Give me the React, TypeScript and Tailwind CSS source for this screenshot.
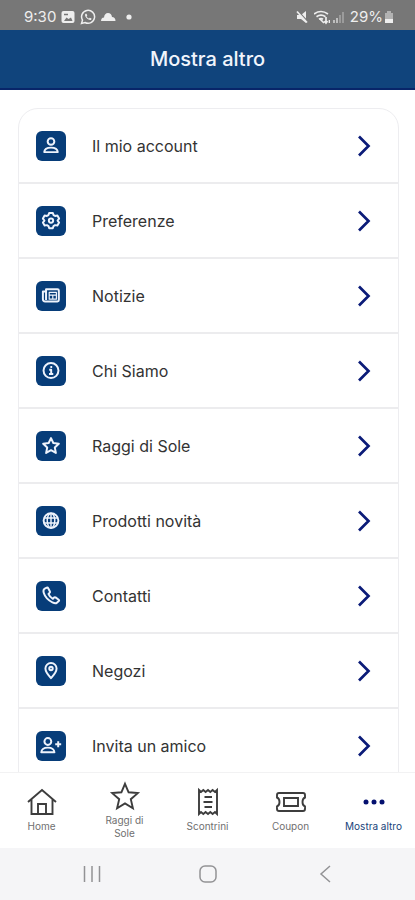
import { useState, type ReactNode } from "react";
import clsx from "clsx";

interface MenuItem {
  label: string;
  icon: ReactNode;
}

interface Tab {
  label: string;
  icon: ReactNode;
}

const MENU: MenuItem[] = [
  {
    label: "Il mio account",
    icon: (
      <>
        <circle cx="10" cy="5" r="3.700" />
        <path d="M2.500 16.800c.3-3.500 3-5 7.500-5s7.200 1.500 7.500 5z" />
      </>
    ),
  },
  {
    label: "Preferenze",
    icon: (
      <>
        <path d="M8 1h4l.8 2.400 1.700 1 2.600-.5 1.900 3.400-1.700 2.200 1.700 2.200-1.900 3.400-2.600-.5-1.700 1L12 18H8l-.8-2.400-1.700-1-2.600.5L1 11.700l1.700-2.200L1 7.300l1.900-3.400 2.600.5 1.700-1z" />
        <circle cx="10" cy="9.500" r="2.400" />
      </>
    ),
  },
  {
    label: "Notizie",
    icon: (
      <>
        <path d="M4.500 2.500h12.700q1.500 0 1.500 1.500v10.500q0 1.500-1.500 1.500H3.500Q1 16 1 13.500V5h3.500zM4.500 5v9.500" />
        <path d="M8 6h8v3H8zM8 9v4.500h8V9M12 9v4.500" strokeWidth="1.300" />
      </>
    ),
  },
  {
    label: "Chi Siamo",
    icon: (
      <>
        <circle cx="10" cy="9.500" r="8.300" />
        <path d="M8 8.700h2.200v4.500M7.800 13.300h4.700M9.300 5.500h2" />
      </>
    ),
  },
  {
    label: "Raggi di Sole",
    icon: (
      <path d="M10 1.200l2.600 5.500 6.100.7-4.500 4.200 1.200 6.100L10 14.700l-5.400 3 1.200-6.100-4.500-4.200 6.100-.7z" />
    ),
  },
  {
    label: "Prodotti novità",
    icon: (
      <>
        <circle cx="10" cy="9.500" r="8.200" />
        <ellipse cx="10" cy="9.500" rx="4.200" ry="8.200" strokeWidth="1.600" />
        <path d="M10 1.500v16M2.500 6.700h15M2.500 12.300h15" strokeWidth="1.600" />
      </>
    ),
  },
  {
    label: "Contatti",
    icon: (
      <path d="M5.300.8L2.600 2.200C.6 3.700 1.800 8.500 5.500 12.700c3.900 4.100 8.700 6 10.700 5.100l2.500-2.200q.7-.8-.1-1.500l-3.600-2.600q-.9-.5-1.600.2l-1.300 1.400C10.400 12.300 8 9.900 7.200 7.700l1.200-1.200q.8-.7.4-1.600L6.900 1.400q-.5-1-1.600-.6z" />
    ),
  },
  {
    label: "Negozi",
    icon: (
      <>
        <path d="M10 18C7.500 15.200 3.800 11.400 3.800 7.300a6.200 6.200 0 0 1 12.400 0c0 4.100-3.700 7.900-6.200 10.700z" />
        <circle cx="10" cy="7.300" r="1.900" />
      </>
    ),
  },
  {
    label: "Invita un amico",
    icon: (
      <>
        <circle cx="6.500" cy="5" r="3.800" />
        <path d="M-.8 17c.3-3.500 3-5.200 7.300-5.200s7 1.700 7.300 5.200z" />
        <path d="M18 4.700v6.600M14.700 8h6.600" />
      </>
    ),
  },
];

const TABS: Tab[] = [
  {
    label: "Home",
    icon: (
      <>
        <path d="M0 14L14 2l14 12M3.500 11.500V26h21V11.500" />
        <path d="M10 26V16h8v10" />
      </>
    ),
  },
  {
    label: "Raggi di Sole",
    icon: (
      <path d="M14 1.800l3.600 8.500 9.200.8-7 6.100 2.100 9-7.900-4.800-7.900 4.800 2.100-9-7-6.100 9.200-.8z" />
    ),
  },
  {
    label: "Scontrini",
    icon: (
      <>
        <path d="M5 2l2 2 2.300-2 2.300 2L14 2l2.300 2 2.300-2L21 4l2-2v24l-2-2-2.400 2-2.300-2L14 26l-2.400-2-2.300 2L7 24l-2 2z" />
        <path d="M10.500 9H18M9.500 14h9M10.500 19H18" />
      </>
    ),
  },
  {
    label: "Coupon",
    icon: (
      <>
        <path d="M2 5h24q2 0 2 2v2.500q-2.500 1-2.500 4.500t2.500 4.500V21q0 2-2 2H2q-2 0-2-2v-2.500q2.500-1 2.500-4.500T0 9.500V7q0-2 2-2z" />
        <path d="M7 10h14v8H7z" />
      </>
    ),
  },
  {
    label: "Mostra altro",
    icon: (
      <g fill="currentColor" stroke="none">
        <circle cx="6" cy="14" r="2.500" />
        <circle cx="14" cy="14" r="2.500" />
        <circle cx="22" cy="14" r="2.500" />
      </g>
    ),
  },
];

function StatusBar() {
  return (
    <div className="flex h-[30px] shrink-0 items-center justify-between bg-[#777777] pt-1 pr-5 pl-6 text-[15px] leading-5 text-[#eeeeee]">
      <div className="flex items-center gap-1">
        <span>9:30</span>
        <svg className="size-4" viewBox="0 0 16 16" aria-hidden="true">
          <rect x="1.500" y="2" width="13" height="12" rx="2" fill="currentColor" />
          <path d="M4 12l2.500-3.500L8.500 10 11 8.500l1.500 3.500z" fill="#777777" />
          <path d="M4 5.500h4" stroke="#777777" strokeWidth="1.500" />
        </svg>
        <svg className="size-4" viewBox="0 0 16 16" fill="none" stroke="currentColor" strokeWidth="1.500" aria-hidden="true">
          <path d="M1.500 14.500l1-3.400a6.500 6.500 0 1 1 2.500 2.400z" />
          <path d="M5.500 4.800c-.9 1-.5 2.700 1.300 4.400s3.600 2.200 4.500 1.200l.2-.8-1.700-.8-.8.8C8 9.200 7 8.200 6.600 7.200l.7-.8-.8-1.700z" fill="currentColor" stroke="none" />
        </svg>
        <svg className="size-4" viewBox="0 0 16 16" fill="currentColor" aria-hidden="true">
          <path d="M1 12c0-2 1-3.300 3-3.500C4.300 5.500 5.800 4 8 4s3.700 1.500 4 4c2 0 3.500 1.500 3.500 4z" />
        </svg>
        <svg className="ml-1 size-3" viewBox="0 0 12 12" fill="currentColor" aria-hidden="true">
          <circle cx="5" cy="6" r="2.600" />
        </svg>
      </div>
      <div className="flex items-center">
        <svg className="mr-1 size-4" viewBox="0 0 16 16" fill="currentColor" aria-hidden="true">
          <path d="M3 6h4l5-4v12l-5-4H3z" />
          <path d="M4 2l11 12" stroke="#777777" strokeWidth="1.500" />
          <path d="M3 2.500l10 11" stroke="currentColor" strokeWidth="1.700" />
        </svg>
        <svg className="size-4" viewBox="0 0 16 16" fill="none" stroke="currentColor" strokeWidth="1.700" aria-hidden="true">
          <path d="M0 5Q7 0 14 5M2.500 7.800q4.500-3.200 9 0M5 10.300q2-1.500 4 0" />
          <path d="M6 10l4 4M12 8v6M10.500 12l1.500 2 1.500-2M15.500 14v-3" />
        </svg>
        <svg className="mr-1 size-4" viewBox="0 0 16 16" fill="currentColor" aria-hidden="true">
          <path d="M3 11h2v3H3zM6 9h2v5H6z" opacity=".6" />
          <path d="M9 6h2v8H9zM12 3h2v11h-2z" opacity=".3" />
        </svg>
        <span>29%</span>
        <svg className="h-4 w-3" viewBox="0 0 12 16" fill="currentColor" aria-hidden="true">
          <path d="M4 2h4v2h2v6H2V4h2z" opacity=".5" />
          <path d="M2 10h8v4H2z" />
        </svg>
      </div>
    </div>
  );
}

function MenuRow({ label, icon }: MenuItem) {
  return (
    <li className="border-b-2 border-[#ececee]">
      <a href="#" className="flex h-[73px] items-center pr-6 pl-[17px]">
        <span className="flex size-[30px] items-center justify-center rounded-md bg-[#073d79]">
          <svg
            className="size-[18px] overflow-visible text-[#eef3fc]"
            viewBox="0 0 20 20"
            fill="none"
            stroke="currentColor"
            strokeWidth="2.200"
            strokeLinejoin="round"
            aria-hidden="true"
          >
            {icon}
          </svg>
        </span>
        <span className="ml-[26px] flex-1 text-base leading-5 text-[#333333]">{label}</span>
        <svg className="h-6 w-5" viewBox="0 0 20 24" fill="none" stroke="#0b1b78" strokeWidth="2.700" aria-hidden="true">
          <path d="M5 2.500l9.500 9.500L5 21.500" />
        </svg>
      </a>
    </li>
  );
}

function TabBar() {
  const [active, setActive] = useState("Mostra altro");
  return (
    <nav className="grid h-[76px] shrink-0 grid-cols-5 border-t border-[#f2f2f3] bg-white">
      {TABS.map((tab) => (
        <button
          key={tab.label}
          type="button"
          onClick={() => setActive(tab.label)}
          className={clsx(
            "flex flex-col items-center justify-center gap-1",
            active === tab.label ? "text-[#17437a]" : "text-[#707070]",
          )}
        >
          <svg
            className={clsx(
              "size-7 overflow-visible",
              active === tab.label ? "text-[#04106f]" : "text-[#3d3d3d]",
            )}
            viewBox="0 0 28 28"
            fill="none"
            stroke="currentColor"
            strokeWidth="1.900"
            aria-hidden="true"
          >
            {tab.icon}
          </svg>
          <span className={clsx("text-[10px] leading-[13px]", tab.label === "Raggi di Sole" && "w-11")}>
            {tab.label}
          </span>
        </button>
      ))}
    </nav>
  );
}

function SystemBar() {
  return (
    <div className="grid h-[52px] shrink-0 grid-cols-3 bg-[#f5f5f7] pr-8 pl-[34px] text-[#929295]">
      <button type="button" aria-label="Recenti" className="flex items-center justify-center">
        <svg className="size-5" viewBox="0 0 20 20" stroke="currentColor" strokeWidth="1.500">
          <path d="M2.500 2v16M10 2v16M17.500 2v16" />
        </svg>
      </button>
      <button type="button" aria-label="Schermata iniziale" className="flex items-center justify-center">
        <svg className="size-5" viewBox="0 0 20 20" fill="none" stroke="currentColor" strokeWidth="1.500">
          <rect x="2" y="2" width="16" height="16" rx="5" />
        </svg>
      </button>
      <button type="button" aria-label="Indietro" className="flex items-center justify-center">
        <svg className="size-5" viewBox="0 0 20 20" fill="none" stroke="currentColor" strokeWidth="1.500">
          <path d="M15 2L6 10l9 8" />
        </svg>
      </button>
    </div>
  );
}

export default function App() {
  return (
    <div className="flex h-screen flex-col bg-white font-['Inter',sans-serif]">
      <StatusBar />
      <header className="flex h-[60px] shrink-0 items-center justify-center border-b-2 border-[#082569] bg-[#10447c]">
        <h1 className="text-xl font-medium text-[#f1f5fc]">Mostra altro</h1>
      </header>
      <main className="min-h-0 flex-1 overflow-y-auto pt-[18px] pr-4 pl-[18px] [scrollbar-width:none]">
        <ul className="rounded-t-[20px] border border-[#ededf0]">
          {MENU.map((item) => (
            <MenuRow key={item.label} {...item} />
          ))}
        </ul>
      </main>
      <TabBar />
      <SystemBar />
    </div>
  );
}
